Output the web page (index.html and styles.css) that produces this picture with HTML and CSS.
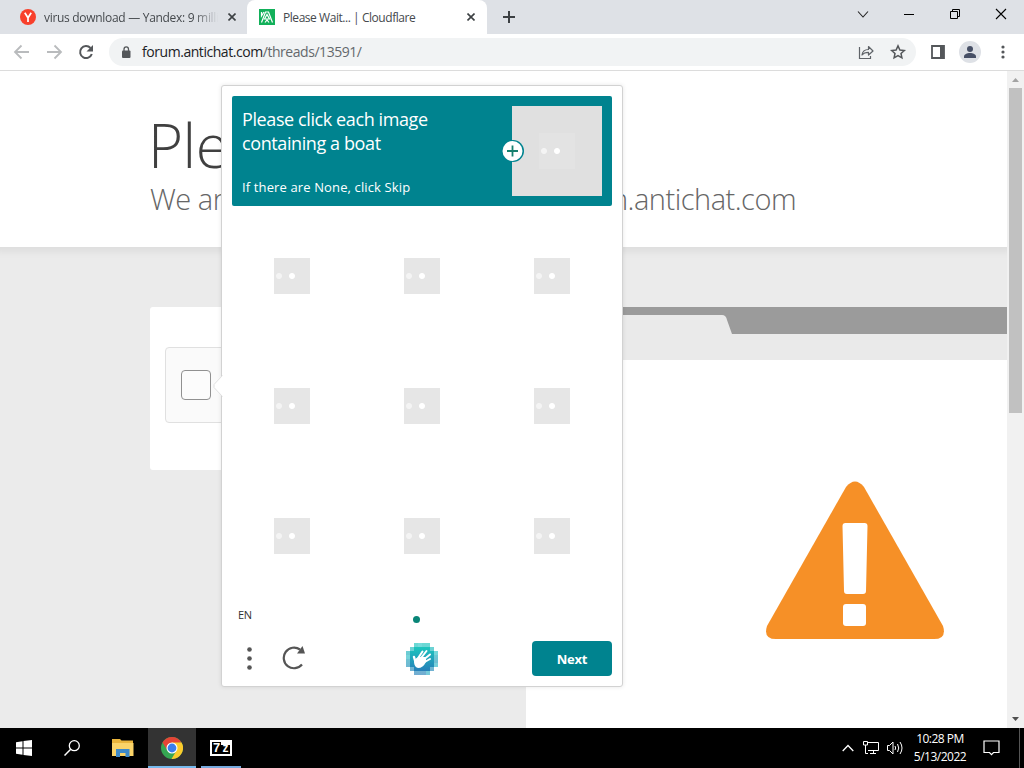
FILE: index.html
```html
<!DOCTYPE html>
<html lang="en">
<head>
    <meta charset="UTF-8">
    <meta name="viewport" content="width=device-width, initial-scale=1.0">
    <title>Please Wait... | Cloudflare</title>
    <link rel="stylesheet" href="styles.css">
</head>
<body>
    <div class="tabs">
        <div class="tab">
            <svg class="favicon" width="16" height="16" viewBox="0 0 16 16"><circle cx="8" cy="8" r="8" fill="#f8402c"/><path d="M4.8 3.8L8 8.8L11.2 3.8M8 8.6V13" fill="none" stroke="#fff" stroke-width="1.7"/></svg>
            <span class="tab-title faded">virus download — Yandex: 9 million</span>
            <svg class="close" width="8" height="8" viewBox="0 0 8 8"><path d="M.5 .5L7.5 7.5M7.5 .5L.5 7.5" stroke="#3c4043" stroke-width="1.6"/></svg>
        </div>
        <div class="tab active">
            <svg class="favicon" width="16" height="16" viewBox="0 0 16 16"><rect width="16" height="16" fill="#12b05a"/><path d="M2.500 13.500L6.500 3H9.500L13.500 13.500M2.500 3V7L5 3M5.500 10L8 5.500L10.500 10ZM6 13.500L8 11L10 13.500" fill="none" stroke="#fff" stroke-width="1.200"/></svg>
            <span class="tab-title">Please Wait... | Cloudflare</span>
            <svg class="close" width="8" height="8" viewBox="0 0 8 8"><path d="M.5 .5L7.5 7.5M7.5 .5L.5 7.5" stroke="#3c4043" stroke-width="1.6"/></svg>
        </div>
        <svg class="new-tab" width="12" height="12" viewBox="0 0 12 12"><path d="M6 0V12M0 6H12" stroke="#3c4043" stroke-width="2"/></svg>
        <div class="window-buttons">
            <svg width="46" height="28" viewBox="0 0 46 28"><path d="M18 11.5L23 17L28 11.5" fill="none" stroke="#222" stroke-width="1.1"/></svg>
            <svg width="46" height="28" viewBox="0 0 46 28"><path d="M18 14.5H28" stroke="#000"/></svg>
            <svg width="46" height="28" viewBox="0 0 46 28"><path d="M18.500 11.500H25.500V18.500H18.500ZM20.500 11.500V9.500H27.500V16.500H25.500" fill="none" stroke="#000"/></svg>
            <svg width="46" height="28" viewBox="0 0 46 28"><path d="M18 9L28 19M28 9L18 19" stroke="#000" stroke-width="1.1"/></svg>
        </div>
    </div>

    <div class="toolbar">
        <svg width="32" height="32" viewBox="0 0 32 32"><path d="M23 16H9.500M15.500 9.500L9 16L15.500 22.500" fill="none" stroke="#b9bbbd" stroke-width="1.8"/></svg>
        <svg width="32" height="32" viewBox="0 0 32 32"><path d="M9 16H22.500M16.500 9.500L23 16L16.500 22.500" fill="none" stroke="#b9bbbd" stroke-width="1.8"/></svg>
        <svg width="32" height="32" viewBox="0 0 32 32"><path d="M20.500 12A6 6 0 1 0 21.800 18" fill="none" stroke="#54575a" stroke-width="2"/><path d="M23 9V15.500H16.500Z" fill="#54575a"/></svg>
        <div class="omnibox">
            <svg class="lock" width="10" height="12" viewBox="0 0 10 12"><rect x="1" y="4.500" width="8.500" height="7.500" rx="1" fill="#54575a"/><path d="M3 5V3.200A2.200 2.200 0 0 1 7.500 3.200V5" fill="none" stroke="#54575a" stroke-width="1.300"/></svg>
            <span class="url">forum.antichat.com<span class="path">/threads/13591/</span></span>
            <svg width="32" height="28" viewBox="0 0 32 28"><path d="M9.500 9V20.500H20.500V18" fill="none" stroke="#5f6368" stroke-width="1.200"/><path d="M12 17C12.500 13 14.500 11.500 18.500 11.500V8.500L23 13L18.500 17V14.300C15.500 14.300 13.500 15 12 17Z" fill="none" stroke="#5f6368" stroke-width="1.200" stroke-linejoin="round"/></svg>
            <svg width="32" height="28" viewBox="0 0 32 28"><path d="M16 7.900L17.900 12L22.300 12.500L19 15.500L19.900 19.900L16 17.700L12.100 19.900L13 15.500L9.700 12.500L14.100 12Z" fill="none" stroke="#54575a" stroke-width="1.500"/></svg>
        </div>
        <svg class="panel-icon" width="14" height="14" viewBox="0 0 14 14"><path d="M1 1H13V13H1Z" fill="none" stroke="#54575a" stroke-width="1.800"/><path d="M9 1H13V13H9Z" fill="#54575a"/></svg>
        <svg class="avatar" width="22" height="22" viewBox="0 0 22 22"><circle cx="11" cy="11" r="11" fill="#dee1e6"/><circle cx="11" cy="8" r="3" fill="#475066"/><path d="M5 17V15.500C5 13.400 8 12 11 12S17 13.400 17 15.500V17Z" fill="#475066"/></svg>
        <svg class="menu" width="4" height="14" viewBox="0 0 4 14"><g fill="#54575a"><circle cx="2" cy="2" r="1.600"/><circle cx="2" cy="7" r="1.600"/><circle cx="2" cy="12" r="1.600"/></g></svg>
    </div>

    <div class="viewport">
        <div class="page">
            <div class="page-header">
                <h1>Please</h1>
                <h2><span>We are</span><span>forum.antichat.com</span></h2>
            </div>
            <div class="page-body">
                <div class="check-card">
                    <div class="check-widget"><div class="checkbox"></div></div>
                </div>
                <div class="browser-shot">
                    <svg width="481" height="53" viewBox="0 0 481 53"><rect width="481" height="53" fill="#eaeaea"/><path d="M0 0H481V27H206L201 13Q200 8 196 8H0Z" fill="#9b9b9b"/></svg>
                    <div class="shot-content">
                        <svg width="180" height="159" viewBox="0 0 180 159"><path d="M81 6Q90 -5 99 6L178 145Q182 158 169 158H11Q-2 158 2 145Z" fill="#f69027"/><path d="M80.500 42H99.500Q102.500 42 102.500 45L101 110Q101 113 98 113H82Q79 113 79 110L77.500 45Q77.500 42 80.500 42Z" fill="#fff"/><rect x="78" y="123" width="23" height="22" rx="3" fill="#fff"/></svg>
                    </div>
                </div>
            </div>

            <div class="captcha">
                <svg class="arrow" width="10" height="22" viewBox="0 0 10 22"><path d="M10 0L1 9.500V12.500L10 22Z" fill="#fff"/><path d="M9.500 .5L1 9.500V12.500L9.500 21.500" fill="none" stroke="#e0e0e0"/></svg>
                <div class="prompt">
                    <div class="prompt-text">
                        <p class="question">Please click each image<br>containing a boat</p>
                        <p class="hint">If there are None, click Skip</p>
                    </div>
                    <div class="sample">
                        <svg class="plus" width="22" height="22" viewBox="0 0 22 22"><circle cx="11" cy="11" r="11" fill="#00838f"/><circle cx="10.500" cy="11" r="10" fill="#fff"/><path d="M10.500 5.500V16.500M5 11H16" stroke="#16806f" stroke-width="1.800"/></svg>
                        <div class="loading"></div>
                    </div>
                </div>
                <div class="tiles">
                    <div class="loading"></div>
                    <div class="loading"></div>
                    <div class="loading"></div>
                    <div class="loading"></div>
                    <div class="loading"></div>
                    <div class="loading"></div>
                    <div class="loading"></div>
                    <div class="loading"></div>
                    <div class="loading"></div>
                </div>
                <div class="status">
                    <span>EN</span>
                    <i class="crumb"></i>
                </div>
                <div class="controls">
                    <svg width="35" height="36" viewBox="0 0 35 36"><g fill="#555"><circle cx="17.500" cy="8.500" r="2.300"/><circle cx="17.500" cy="17.500" r="2.300"/><circle cx="17.500" cy="26.500" r="2.300"/></g></svg>
                    <svg class="refresh" width="24" height="24" viewBox="0 0 24 24"><path d="M18 3.500A10.300 10.300 0 1 0 20 18.500" fill="none" stroke="#555" stroke-width="2.200"/><path d="M20.500 0L23 7.500H15Z" fill="#555"/></svg>
                    <svg class="logo" width="32" height="32" viewBox="0 0 32 32">
                        <defs><linearGradient id="teal" x1="0" y1="0" x2="0" y2="1"><stop offset="0" stop-color="#1cc6bd"/><stop offset="1" stop-color="#267fb9"/></linearGradient></defs>
                        <path d="M8 0H24V4H28V8H32V24H28V28H24V32H8V28H4V24H0V8H4V4H8Z" fill="url(#teal)" opacity=".65"/>
                        <path d="M8 4H24V8H28V24H24V28H8V24H4V8H8Z" fill="url(#teal)"/>
                        <path d="M0 12H4V16H0ZM28 8H32V12H28ZM12 0H16V4H12ZM20 28H24V32H20ZM28 20H32V24H28Z" fill="#7cdde0" opacity=".6"/>
                        <path d="M9.500 19L8 14" fill="none" stroke="#fff" stroke-width="2.400" stroke-linecap="round"/>
                        <path d="M8 18Q10 14.500 13 14L20 14L20 19Q17 25 12 25Q8 24 8 18Z" fill="#fff"/>
                        <path d="M11.500 16L16.500 8.500M13.500 17L20.500 8M16 18L24 11.500M16 20.500L24 16" stroke="#fff" stroke-width="2" stroke-linecap="round"/>
                    </svg>
                    <button type="button">Next</button>
                </div>
            </div>
        </div>
        <div class="scrollbar">
            <svg width="17" height="17" viewBox="0 0 17 17"><path d="M5 11L8.500 7L12 11Z" fill="#a3a3a3"/></svg>
            <div class="thumb"></div>
            <svg class="down" width="17" height="17" viewBox="0 0 17 17"><path d="M5 6L8.500 10L12 6Z" fill="#505050"/></svg>
        </div>
    </div>

    <div class="taskbar">
        <div class="task">
            <svg width="16" height="16" viewBox="0 0 16 16"><path d="M0 2.300L6.500 1.300V7.500H0ZM7.500 1.100L16 0V7.500H7.500ZM0 8.500H6.500V14.700L0 13.700ZM7.500 8.500H16V16L7.500 14.900Z" fill="#fff"/></svg>
        </div>
        <div class="task">
            <svg width="16" height="16" viewBox="0 0 16 16"><circle cx="10.300" cy="5.700" r="5" fill="none" stroke="#fff" stroke-width="1.300"/><path d="M6.700 9.300L.500 15.500" stroke="#fff" stroke-width="1.500"/></svg>
        </div>
        <div class="task explorer">
            <svg width="22" height="18" viewBox="0 0 22 18"><path d="M0 0H8L9.500 1.500H21V17H0Z" fill="#eab53c"/><path d="M0 4H21.500V17H0Z" fill="#fbd469"/><path d="M4 10H17.500V18H13.500V14H8V18H4Z" fill="#3f8ac9"/></svg>
        </div>
        <div class="task focused">
            <svg width="22" height="22" viewBox="0 0 22 22"><circle cx="11" cy="11" r="11" fill="#35a652"/><path d="M1.500 5.500A11 11 0 0 1 20.500 5.500L11 6.500L6.500 13.500Z" fill="#e54436"/><path d="M20.500 5.500A11 11 0 0 1 10.500 22L15.500 13.500L11 6V5.500Z" fill="#fcca2c"/><circle cx="11" cy="11" r="5.500" fill="#fff"/><circle cx="11" cy="11" r="4.400" fill="#3b7ded"/></svg>
        </div>
        <div class="task sevenzip">
            <div class="zip-icon"><span>7</span><span class="z">z</span></div>
        </div>
        <div class="tray">
            <svg width="12" height="8" viewBox="0 0 12 8"><path d="M.700 7L6 1.500L11.300 7" fill="none" stroke="#fff" stroke-width="1.300"/></svg>
            <svg width="17" height="14" viewBox="0 0 17 14"><path d="M5 1.500H15.500V9.500H5M10.500 9.500V12.500M7 12.500H13M.500 .500H4.500V4H.500ZM2.500 4V12.500H5" fill="none" stroke="#fff"/></svg>
            <svg width="17" height="14" viewBox="0 0 17 14"><path d="M.500 4.500H2.500L6 1V13L2.500 9.500H.500ZM8 5Q9.300 7 8 9M10.500 3Q13 7 10.500 11M13 1Q17 7 13 13" fill="none" stroke="#fff"/></svg>
            <div class="clock">10:28 PM<br>5/13/2022</div>
            <svg width="17" height="16" viewBox="0 0 17 16"><path d="M1 1H16V12.500H10.500L8.500 14.700L6.500 12.500H1Z" fill="none" stroke="#fff" stroke-width="1.200"/></svg>
        </div>
    </div>
</body>
</html>
```
FILE: styles.css
```css
* {
    box-sizing: border-box;
}
body {
    margin: 0;
    width: 1024px;
    height: 768px;
    display: flex;
    flex-direction: column;
    overflow: hidden;
    font-family: "Open Sans", "Noto Sans", sans-serif;
    background-color: #fff;
}
svg {
    display: block;
    flex: none;
}

/* tab strip */
.tabs {
    height: 34px;
    display: flex;
    background-color: #dee1e6;
}
.tab {
    width: 247px;
    display: flex;
    align-items: center;
    padding-left: 20px;
    font-size: 12px;
    letter-spacing: -0.3px;
    color: #45494d;
}
.tab.active {
    width: 240px;
    padding-left: 12px;
    border-radius: 8px 8px 0 0;
    letter-spacing: -0.45px;
    background-color: #fff;
}
.tab-title {
    width: 174px;
    margin-left: 8px;
    overflow: hidden;
    white-space: nowrap;
}
.tab.active .tab-title {
    width: 180px;
}
.faded {
    -webkit-mask-image: linear-gradient(to right, #000 150px, transparent 174px);
    mask-image: linear-gradient(to right, #000 150px, transparent 174px);
}
.close {
    margin-left: 10px;
}
.active .close {
    margin-left: 4px;
}
.new-tab {
    margin: 11px 0 0 16px;
}
.window-buttons {
    display: flex;
    margin-left: auto;
}

/* toolbar */
.toolbar {
    height: 37px;
    display: flex;
    align-items: center;
    padding: 0 19px 1px 6px;
    border-bottom: 1px solid #dcdcdc;
}
.omnibox {
    width: 807px;
    height: 28px;
    margin-left: 7px;
    padding: 0 2px 0 12px;
    display: flex;
    align-items: center;
    border-radius: 14px;
    background-color: #f1f3f4;
}
.url {
    flex: 1;
    margin-left: 11px;
    font-size: 14px;
    letter-spacing: -0.45px;
    color: #202124;
}
.path {
    color: #64686c;
}
.panel-icon {
    margin-left: 15px;
}
.avatar {
    margin-left: 14px;
}
.menu {
    margin-left: 20px;
}

/* page */
.viewport {
    height: 657px;
    display: flex;
}
.page {
    position: relative;
    width: 1007px;
    display: flex;
    flex-direction: column;
    overflow: hidden;
    background-color: #ebebeb;
}
.page-header {
    height: 176px;
    padding: 35px 0 0 150px;
    background-color: #fff;
    box-shadow: 0 0 6px 5px #dedede;
}
h1, h2 {
    margin: 0;
    font-weight: 300;
    white-space: nowrap;
}
h1 {
    margin-left: -2px;
    font-size: 60px;
    line-height: 78px;
    letter-spacing: -0.5px;
    color: #404040;
}
h2 {
    width: 646px;
    display: flex;
    justify-content: space-between;
    font-size: 29px;
    line-height: 30px;
    letter-spacing: -0.5px;
    color: #666;
}
.page-body {
    flex: 1;
    display: flex;
    align-items: flex-start;
    padding: 60px 0 0 150px;
}
.check-card {
    width: 346px;
    height: 163px;
    padding: 40px 15px;
    border-radius: 3px;
    background-color: #fff;
}
.check-widget {
    width: 304px;
    height: 76px;
    padding: 22px 15px;
    border: 1px solid #e0e0e0;
    border-radius: 4px;
    background-color: #fafafa;
}
.checkbox {
    width: 30px;
    height: 30px;
    border: 1px solid #919191;
    border-radius: 4px;
    background-color: #fcfcfc;
}
.browser-shot {
    width: 481px;
    margin-left: 30px;
}
.shot-content {
    height: 368px;
    padding: 121px 0 0 239px;
    background-color: #fff;
}

/* challenge popup */
.captcha {
    position: absolute;
    left: 221px;
    top: 14px;
    width: 402px;
    height: 602px;
    padding: 10px;
    border: 1px solid #d2d2d2;
    border-radius: 3px;
    background-color: #fff;
    box-shadow: 0 0 4px rgba(0, 0, 0, 0.1);
}
.arrow {
    position: absolute;
    left: -9px;
    top: 289px;
}
.prompt {
    height: 110px;
    display: flex;
    justify-content: space-between;
    padding: 10px;
    border-radius: 2px;
    color: #fff;
    background-color: #00838f;
}
.prompt p {
    margin: 0;
    white-space: nowrap;
}
.prompt .question {
    height: 71px;
    padding-top: 1px;
    font-size: 18px;
    line-height: 24px;
    letter-spacing: -0.4px;
}
.prompt .hint {
    font-size: 13px;
    line-height: 20px;
    letter-spacing: 0.13px;
}
.sample {
    position: relative;
    width: 90px;
    height: 90px;
    display: grid;
    place-items: center;
    background-color: #e0e0e0;
}
.plus {
    position: absolute;
    left: -10px;
    top: 34px;
}
.tiles {
    display: grid;
    grid-template: repeat(3, 120px) / repeat(3, 120px);
    gap: 10px;
    place-items: center;
    margin-top: 10px;
}
.loading {
    width: 36px;
    height: 36px;
    background-color: #e6e6e6;
    background-image: radial-gradient(circle at 5px 18px, #f4f4f4 2.5px, transparent 3.5px), radial-gradient(circle at 18px 18px, #fff 2.5px, transparent 3.5px);
}
.sample .loading {
    background-color: #e3e3e3;
}
.status {
    height: 45px;
    display: flex;
    align-items: flex-start;
    padding: 10px 6px 0;
    font-size: 11px;
    line-height: 18px;
    letter-spacing: -0.3px;
    color: #333;
}
.status span {
    width: 175px;
}
.crumb {
    width: 7px;
    height: 7px;
    margin-top: 10px;
    border-radius: 50%;
    background-color: #098577;
}
.controls {
    height: 35px;
    display: flex;
    align-items: center;
}
.refresh {
    margin: -2px 0 0 15px;
}
.logo {
    margin-left: 100px;
}
.controls button {
    width: 80px;
    height: 35px;
    margin-left: auto;
    padding: 0;
    border: none;
    border-radius: 4px;
    font-family: inherit;
    font-size: 13px;
    font-weight: 700;
    letter-spacing: -0.2px;
    color: #fff;
    background-color: #00838f;
    cursor: pointer;
}

.scrollbar {
    width: 17px;
    display: flex;
    flex-direction: column;
    background-color: #f1f1f1;
}
.thumb {
    width: 13px;
    height: 325px;
    margin-left: 2px;
    background-color: #c1c1c1;
}
.down {
    margin-top: auto;
}

/* taskbar */
.taskbar {
    height: 40px;
    display: flex;
    background-color: #000;
}
.task {
    width: 48px;
    display: flex;
    align-items: center;
    justify-content: center;
}
.explorer {
    width: 52px;
    padding-left: 2px;
}
.focused {
    background-color: #333;
    border-bottom: 2px solid #76b9ed;
    padding-top: 2px;
}
.sevenzip {
    width: 40px;
    margin-left: 5px;
    padding-top: 2px;
    border-bottom: 2px solid #76a9dd;
}
.zip-icon {
    width: 22px;
    height: 16px;
    display: flex;
    align-items: flex-end;
    padding: 2px;
    background-color: #fff;
}
.zip-icon span {
    width: 9px;
    height: 12px;
    font: bold 13px/12px "Liberation Sans", sans-serif;
    text-align: center;
    color: #fff;
    background-color: #000;
}
.zip-icon .z {
    height: 9px;
    font-size: 12px;
    line-height: 7px;
}
.tray {
    display: flex;
    align-items: center;
    margin-left: auto;
    padding-right: 19px;
    border-right: 1px solid #555;
    margin-right: 4px;
}
.tray svg + svg {
    margin-left: 9px;
}
.tray svg:nth-child(3) {
    margin-left: 7px;
}
.clock {
    width: 72px;
    margin-right: 7px;
    text-align: center;
    font-size: 12px;
    line-height: 18px;
    letter-spacing: -0.5px;
    color: #fff;
}
```
